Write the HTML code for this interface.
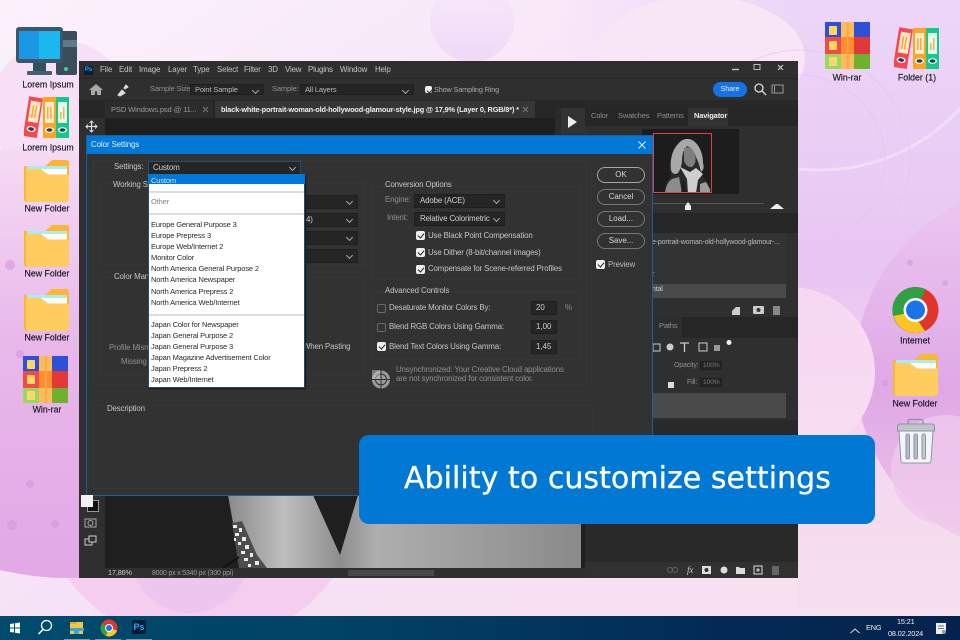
<!DOCTYPE html>
<html><head><meta charset="utf-8"><style>
html,body{margin:0;padding:0;width:960px;height:640px;overflow:hidden;background:#f5dff3}
*{box-sizing:border-box}
#r{position:relative;width:960px;height:640px;overflow:hidden;font-family:"Liberation Sans",sans-serif}
.a,.t,.l,.d,.b{position:absolute}
.t{white-space:nowrap;font-size:7.9px;letter-spacing:-.15px;line-height:10px;color:#c4c4c4;transform:translateY(-5px)}
.g{color:#8f8f8f}.w{color:#efefef}
.l{white-space:nowrap;font-size:8.8px;line-height:11px;color:#14141c;width:80px;text-align:center;transform:translate(-40px,-5.5px);-webkit-text-stroke:.15px #14141c}
.d{white-space:nowrap;font-size:7.5px;letter-spacing:-.15px;line-height:10px;color:#2a2a2a;left:151px;transform:translateY(-5px)}
.b{left:597px;width:48px;height:16px;border:1px solid #a5a5a5;border-radius:8px;text-align:center;color:#d6d6d6;font-size:7.9px;line-height:14px}
.s{position:absolute;background:#252525;height:14px;border:1px solid #1f1f1f;letter-spacing:-.15px;white-space:nowrap}
.s:after{content:"";position:absolute;right:5px;top:3px;width:4px;height:4px;border-right:1px solid #aaa;border-bottom:1px solid #aaa;transform:rotate(45deg)}
.c{position:absolute;width:9px;height:9px;background:#eee;border-radius:2px}
.c:after{content:"";position:absolute;left:3px;top:1px;width:3px;height:5px;border-right:1.4px solid #222;border-bottom:1.4px solid #222;transform:rotate(40deg)}
.u{position:absolute;width:9px;height:9px;background:#333;border:1px solid #6a6a6a;border-radius:2px}
.n{position:absolute;background:#252525;border:1px solid #1f1f1f;color:#cfcfcf;font-size:7.9px;line-height:12px;padding-left:4px;height:14px;width:26px}
.p{position:absolute;border:1px dotted #3a3a3a}
</style></head><body><div id="r">

<svg class="a" style="left:0;top:0" width="960" height="640" viewBox="0 0 960 640">
<defs>
<linearGradient id="bg" x1="0" y1="0" x2="1" y2="1"><stop offset="0" stop-color="#fbf1fb"/><stop offset=".5" stop-color="#f6e2f6"/><stop offset="1" stop-color="#f7dfee"/></linearGradient>
<linearGradient id="bl" x1="0" y1="0" x2="0" y2="1"><stop offset="0" stop-color="#f6dcf5"/><stop offset=".45" stop-color="#e8b8ea"/><stop offset="1" stop-color="#e2a8e7"/></linearGradient>
<linearGradient id="rt" x1="0" y1="0" x2="0" y2="1"><stop offset="0" stop-color="#ecd6f7"/><stop offset=".45" stop-color="#e8c6f2"/><stop offset=".68" stop-color="#f5d6f1"/><stop offset="1" stop-color="#f6dfee"/></linearGradient>
<linearGradient id="rc" x1="0" y1="0" x2="0" y2="1"><stop offset="0" stop-color="#ecc8f0"/><stop offset=".55" stop-color="#dfa8e6"/><stop offset=".8" stop-color="#e9b9e8"/><stop offset="1" stop-color="#f3d5ee"/></linearGradient>
<linearGradient id="pc" x1="0" y1="0" x2="0" y2="1"><stop offset="0" stop-color="#f6d8f2"/><stop offset="1" stop-color="#f8ddf1"/></linearGradient>
<linearGradient id="tp" x1="0" y1="0" x2="1" y2="0"><stop offset="0" stop-color="#ecd6f7" stop-opacity="0"/><stop offset="1" stop-color="#ecd6f7"/></linearGradient>
<linearGradient id="tc" x1="0" y1="0" x2="0" y2="1"><stop offset="0" stop-color="#f0dcf8" stop-opacity="0"/><stop offset="1" stop-color="#efd9f8"/></linearGradient>
<symbol id="folder" viewBox="0 0 45 42"><path d="M20 7L28 0H42Q45 0 45 3V16H20Z" fill="#fdb62f"/><path d="M0 6H45V38Q45 42 41 42H3Q0 42 0 38Z" fill="#fdb62f"/><path d="M3 6H43V15H3Z" fill="#fff"/><path d="M3 6H43V9H3Z" fill="#a7eef0"/><path d="M2 9H17L24 14.500H45V38Q45 42 41 42H4Q2 42 2 38Z" fill="#ffcc60"/></symbol>
<symbol id="binder" viewBox="0 0 45 42"><g transform="rotate(9 8 21)"><rect x="2" y="1" width="14" height="40" fill="#f6484f"/><rect x="4.500" y="5" width="10" height="21" fill="#ffe9c8"/><rect x="7" y="9" width="1.500" height="13" fill="#f9a63c"/><rect x="10" y="9" width="1.500" height="13" fill="#f9a63c"/><ellipse cx="9" cy="33" rx="4.500" ry="2.800" fill="#fff"/><ellipse cx="9" cy="33" rx="3" ry="1.800" fill="#22405a"/></g><rect x="19" y="1" width="13" height="41" fill="#fca522"/><rect x="21" y="6" width="9" height="21" fill="#ffeacc"/><rect x="23" y="11" width="1.500" height="12" fill="#f8aa3a"/><rect x="26" y="11" width="1.500" height="12" fill="#f8aa3a"/><ellipse cx="25.500" cy="34" rx="4.500" ry="2.800" fill="#fff"/><ellipse cx="25.500" cy="34" rx="3" ry="1.800" fill="#22405a"/><rect x="32" y="1" width="13" height="41" fill="#15ca88"/><rect x="34" y="6" width="9" height="21" fill="#e6fbef"/><rect x="36" y="16" width="1.500" height="7" fill="#f2b24c"/><rect x="39" y="11" width="1.500" height="12" fill="#f2b24c"/><ellipse cx="38.500" cy="34" rx="4.500" ry="2.800" fill="#fff"/><ellipse cx="38.500" cy="34" rx="3" ry="1.800" fill="#22405a"/></symbol>
<symbol id="rar" viewBox="0 0 45 47"><rect width="16" height="15" fill="#2e50d8"/><rect x="29" width="16" height="15" fill="#2e50d8"/><rect y="15" width="16" height="17" fill="#f04a4a"/><rect x="29" y="15" width="16" height="17" fill="#e33838"/><rect y="32" width="16" height="15" fill="#96dc5c"/><rect x="29" y="32" width="16" height="15" fill="#6fb02d"/><rect x="16" width="13" height="47" fill="#fdbb5c"/><rect x="16" y="15" width="13" height="17" fill="#fd8f2e"/><rect x="22" width="1.500" height="47" fill="#f7a648"/><rect x="4" y="4" width="8" height="9" rx="1" fill="#ffd75e"/><rect x="4" y="19" width="8" height="9" rx="1" fill="#ffd75e"/><rect x="4" y="35" width="8" height="9" rx="1" fill="#ffd675"/></symbol>
<linearGradient id="arm" x1="0" y1="0" x2="1" y2="0"><stop offset="0" stop-color="#8a8a8a"/><stop offset=".5" stop-color="#bebebe"/><stop offset="1" stop-color="#8e8e8e"/></linearGradient>
<linearGradient id="arm2" x1="0" y1="0" x2="1" y2="0"><stop offset="0" stop-color="#8e8e8e"/><stop offset=".15" stop-color="#aeaeae"/><stop offset="1" stop-color="#8a8a8a"/></linearGradient>
</defs>
<rect width="960" height="640" fill="url(#bg)"/>
<rect x="798" y="0" width="162" height="616" fill="url(#rt)"/>
<rect x="560" y="0" width="238" height="62" fill="url(#tp)"/>
<ellipse cx="700" cy="58" rx="105" ry="62" fill="#f8e6f6"/>
<circle cx="472" cy="20" r="42" fill="url(#tc)"/>
<circle cx="820" cy="-20" r="190" fill="none" stroke="#f3e4fa" stroke-width="3" opacity=".7"/>
<circle cx="800" cy="160" r="110" fill="none" stroke="#e4c4f0" stroke-width="1" opacity=".7"/>
<circle cx="800" cy="160" r="85" fill="none" stroke="#e4c4f0" stroke-width="1" opacity=".7"/>
<circle cx="1040" cy="370" r="185" fill="url(#rc)"/>
<circle cx="790" cy="372" r="85" fill="url(#pc)"/>
<circle cx="946" cy="470" r="55" fill="#efc9ec" opacity=".8"/>
<circle cx="60" cy="110" r="70" fill="#f7e0f6"/>
<circle cx="200" cy="480" r="165" fill="#f5cdee"/>
<circle cx="190" cy="553" r="60" fill="#ecc6ee"/>
<path d="M0 150Q60 130 140 190V560Q90 590 0 570Z" fill="url(#bl)"/>
<path d="M10 260a5 5 0 1 0 .1 0M45 310a4 4 0 1 0 .1 0M20 350a4 4 0 1 0 .1 0M30 480a4 4 0 1 0 .1 0M12 520a5 5 0 1 0 .1 0M55 520a4 4 0 1 0 .1 0M910 260a3 3 0 1 0 .1 0M945 280a3 3 0 1 0 .1 0M885 380a3 3 0 1 0 .1 0" fill="#d497dd" opacity=".6"/>
<g>
<rect x="56" y="31" width="21" height="44" rx="2" fill="#3a4d5c"/><rect x="62" y="40" width="15" height="7" fill="#5e7a8c"/><circle cx="66" cy="69" r="2" fill="#44d18f"/>
<rect x="16" y="27" width="47" height="36" rx="3" fill="#3f5666"/><rect x="19" y="31" width="20" height="28" fill="#1a98e6"/><rect x="39" y="31" width="21" height="28" fill="#1ab7f2"/><rect x="33" y="63" width="13" height="8" fill="#33505f"/><rect x="27" y="71" width="25" height="4" rx="1" fill="#46606f"/>
</g>
<use href="#binder" x="24" y="96" width="45" height="42"/>
<use href="#folder" x="24" y="160" width="45" height="42"/>
<use href="#folder" x="24" y="225" width="45" height="42"/>
<use href="#folder" x="24" y="289" width="45" height="42"/>
<use href="#rar" x="23" y="356" width="45" height="47"/>
<use href="#rar" x="825" y="22" width="45" height="47"/>
<use href="#binder" x="894" y="27" width="45" height="42"/>
<use href="#folder" x="893" y="354" width="45" height="42"/>
<g>
<circle cx="915.500" cy="310" r="23" fill="#e0352b"/>
<path d="M915.500 310L895.500 298.500A23 23 0 0 1 915.500 287L926 289Z" fill="#2fa143"/><path d="M915.500 310L895.500 298.500A23 23 0 0 0 903 329.500Z" fill="#2fa143"/>
<path d="M893.500 316L912 312L925 331A23 23 0 0 1 893.500 316Z" fill="#fdc522"/>
<circle cx="915.500" cy="310" r="12" fill="#fff"/><circle cx="915.500" cy="310" r="9.500" fill="#1a73e8"/>
</g>
<g stroke="#8d93a6" stroke-width="1">
<rect x="908" y="419.500" width="15" height="6" rx="1.500" fill="none" stroke-width="1.300"/>
<path d="M899 431H933L931 461Q931 463 929 463H903Q901 463 901 461Z" fill="#f3f5f9"/>
<path d="M897.500 427Q897.500 424 900 424H932Q934.500 424 934.500 427V431H897.500Z" fill="#c0c5cb"/>
<rect x="906" y="434" width="3.500" height="25" rx="1.700" fill="#b4bccb"/><rect x="914" y="434" width="3.500" height="25" rx="1.700" fill="#b4bccb"/><rect x="922" y="434" width="3.500" height="25" rx="1.700" fill="#c6cbc9"/>
</g>
</svg>

<div class="l" style="left:48px;top:85px">Lorem Ipsum</div>
<div class="l" style="left:48px;top:148px">Lorem Ipsum</div>
<div class="l" style="left:47px;top:209px">New Folder</div>
<div class="l" style="left:47px;top:274px">New Folder</div>
<div class="l" style="left:47px;top:338px">New Folder</div>
<div class="l" style="left:47px;top:410px">Win-rar</div>
<div class="l" style="left:847px;top:78px">Win-rar</div>
<div class="l" style="left:917px;top:78px">Folder (1)</div>
<div class="l" style="left:915px;top:341px">Internet</div>
<div class="l" style="left:915px;top:404px">New Folder</div>

<!-- Photoshop window -->
<div class="a" style="left:79px;top:61px;width:719px;height:517px;background:#2f2f2f"></div>
<div class="a" style="left:79px;top:78px;width:719px;height:1px;background:#262626"></div>
<div class="a" style="left:84px;top:66px;width:9px;height:9px;background:#001e36;border-radius:1px;color:#31a8ff;font-size:6px;line-height:9px;text-align:center;font-weight:bold">Ps</div>
<div class="t" style="left:100px;top:70px">File</div><div class="t" style="left:119px;top:70px">Edit</div><div class="t" style="left:139px;top:70px">Image</div><div class="t" style="left:168px;top:70px">Layer</div><div class="t" style="left:193px;top:70px">Type</div><div class="t" style="left:217px;top:70px">Select</div><div class="t" style="left:244px;top:70px">Filter</div><div class="t" style="left:268px;top:70px">3D</div><div class="t" style="left:285px;top:70px">View</div><div class="t" style="left:308px;top:70px">Plugins</div><div class="t" style="left:340px;top:70px">Window</div><div class="t" style="left:375px;top:70px">Help</div>
<svg class="a" style="left:730px;top:61px" width="68" height="17"><path d="M4 7.500H11" stroke="#bbb" stroke-width="1.500" transform="translate(-2,1)"/><rect x="24" y="3.500" width="6" height="5" fill="none" stroke="#bbb"/><path d="M48 4l5 5m0-5l-5 5" stroke="#ccc" stroke-width="1.200"/></svg>

<!-- options bar -->
<svg class="a" style="left:88px;top:82px" width="50" height="16"><path d="M8 2L1 8H3V13H7V9.500H9V13H13V8H15Z" fill="#a8a8a8"/><path d="M30 13l4-5 3 3-5 3zM36 6l2-3 2 2-3 2z" fill="#ddd" stroke="#ddd"/></svg>
<div class="t g" style="left:150px;top:89px;font-size:7.500px">Sample Size:</div>
<div class="s" style="left:190px;top:84px;width:74px;height:11px;line-height:9px;font-size:7.500px;color:#bbb;padding-left:4px">Point Sample</div>
<div class="t g" style="left:272px;top:89px;font-size:7.500px">Sample:</div>
<div class="s" style="left:300px;top:84px;width:114px;height:11px;line-height:9px;font-size:7.500px;color:#bbb;padding-left:4px">All Layers</div>
<div class="c" style="left:425px;top:86px;width:7px;height:7px"></div>
<div class="t g" style="left:434px;top:90px;font-size:7.300px;color:#aaa">Show Sampling Ring</div>
<div class="a" style="left:713px;top:82px;width:34px;height:15px;border-radius:8px;background:#1473e6;color:#eee;font-size:7px;line-height:15px;text-align:center">Share</div>
<svg class="a" style="left:752px;top:81px" width="45" height="16"><circle cx="7" cy="7" r="4" fill="none" stroke="#ddd" stroke-width="1.300"/><path d="M10 10l4 4" stroke="#ddd" stroke-width="1.300"/><rect x="20" y="4" width="11" height="8" fill="none" stroke="#999"/><rect x="22" y="5" width="1" height="6" fill="#999"/></svg>

<!-- tabs -->
<div class="a" style="left:79px;top:100px;width:719px;height:18px;background:#262626"></div>
<div class="a" style="left:105px;top:101px;width:108px;height:17px;background:#2c2c2c"></div>
<div class="a" style="left:215px;top:101px;width:320px;height:17px;background:#363636"></div>
<div class="t" style="left:111px;top:110px;font-size:7.600px;color:#999">PSD Windows.psd @ 11...</div>
<div class="t" style="left:221px;top:110px;font-size:7.350px;color:#eee;font-weight:bold">black-white-portrait-woman-old-hollywood-glamour-style.jpg @ 17,9% (Layer 0, RGB/8*) *</div>
<svg class="a" style="left:202px;top:106px" width="330" height="8"><path d="M1 1l5 5m0-5l-5 5M321 1l5 5m0-5l-5 5" stroke="#777"/></svg>
<div class="a" style="left:79px;top:118px;width:26px;height:460px;background:#2f2f2f"></div>
<div class="a" style="left:105px;top:118px;width:450px;height:450px;background:#1f1f1f"></div>
<div class="a" style="left:555px;top:108px;width:30px;height:460px;background:#2b2b2b"></div>
<div class="a" style="left:561px;top:108px;width:24px;height:26px;background:#333;color:#eee"></div>
<svg class="a" style="left:568px;top:116px" width="10" height="12"><path d="M0 0L9 6L0 12Z" fill="#eee"/></svg>
<svg class="a" style="left:85px;top:120px" width="13" height="13"><path d="M6.500 1V12M1 6.500H12" stroke="#ddd" stroke-width="1.200"/><path d="M4.500 3L6.500 1L8.500 3M4.500 10L6.500 12L8.500 10M3 4.500L1 6.500L3 8.500M10 4.500L12 6.500L10 8.500" stroke="#ddd" fill="none"/></svg>

<!-- right panels -->
<div class="a" style="left:585px;top:100px;width:213px;height:478px;background:#2f2f2f"></div>
<div class="a" style="left:585px;top:100px;width:213px;height:8px;background:#282828"></div>
<div class="a" style="left:585px;top:108px;width:213px;height:18px;background:#262626"></div>
<div class="a" style="left:688px;top:108px;width:40px;height:18px;background:#333"></div>
<div class="t g" style="left:591px;top:116px;font-size:7.500px">Color</div><div class="t g" style="left:618px;top:116px;font-size:7.500px">Swatches</div><div class="t g" style="left:657px;top:116px;font-size:7.500px">Patterns</div><div class="t" style="left:694px;top:116px;font-size:7.500px;color:#eee;font-weight:bold">Navigator</div>
<div class="a" style="left:642px;top:129px;width:97px;height:65px;background:#1d1d1d"></div>
<svg class="a" style="left:653px;top:133px" width="60" height="60" viewBox="0 0 60 60">
<rect width="60" height="60" fill="#1c1c1c"/>
<path d="M12 60Q12 48 18 44L16 36Q18 16 28 8Q36 3 43 10Q50 18 50 30Q52 36 47 40L55 50V60Z" fill="#2a2a2a"/>
<path d="M28 8Q36 3 43 10Q50 18 50 30Q52 36 48 39Q46 30 43 24Q40 15 34 13Q29 18 29 27Q29 34 25 40Q20 43 18 37Q16 18 28 8Z" fill="#a8a8a8"/>
<path d="M31 15Q39 12 42 22Q44 30 39 34Q34 35 31 28Z" fill="#7e7e7e"/>
<path d="M27 34L37 39L43 35L50 41L45 47L43 60H35L34 46Z" fill="#cfcfcf"/>
<path d="M12 60Q13 50 19 46L26 44L29 60Z" fill="#8c8c8c"/>
<path d="M30 46L34 60H28Z" fill="#1c1c1c"/>
<path d="M47 51L53 49L57 56V60H47Z" fill="#9c9c9c"/>
</svg>
<div class="a" style="left:653px;top:133px;width:59px;height:60px;border:1px solid #e0413a"></div>
<div class="a" style="left:652px;top:203px;width:112px;height:1px;background:#555"></div>
<svg class="a" style="left:684px;top:202px" width="100" height="9"><path d="M4 0L7 4V8H1V4Z" fill="#eee"/><path d="M86 7L92 2H94L100 7Z" fill="#eee"/></svg>
<div class="a" style="left:585px;top:213px;width:213px;height:20px;background:#262626"></div>
<div class="a" style="left:652px;top:233px;width:134px;height:66px;background:#333"></div>
<div class="a" style="left:652px;top:284px;width:134px;height:14px;background:#4a4a4a"></div>
<div class="t" style="left:652px;top:243px;font-size:7px;color:#bbb">e-portrait-woman-old-hollywood-glamour-...</div>
<div class="t" style="left:652px;top:275px;font-size:7px;color:#bbb">r</div>
<div class="t" style="left:652px;top:290px;font-size:7px;color:#ccc">ntal</div>
<svg class="a" style="left:730px;top:303px" width="55" height="14"><path d="M2 8l4-4 4 4v4H2z M6 4h4v4H6z" fill="#ccc"/><rect x="23" y="3" width="11" height="8" rx="1" fill="#ccc"/><circle cx="28.500" cy="7" r="2" fill="#333"/><rect x="43" y="3" width="7" height="9" fill="#888"/></svg>
<div class="a" style="left:585px;top:317px;width:213px;height:21px;background:#262626"></div>
<div class="a" style="left:652px;top:317px;width:30px;height:21px;background:#2d2d2d"></div>
<div class="t g" style="left:659px;top:326px;font-size:7.500px">Paths</div>
<svg class="a" style="left:652px;top:340px" width="85" height="16"><rect x="1" y="4" width="7" height="7" fill="none" stroke="#ccc"/><circle cx="18" cy="7" r="3.500" fill="#ccc"/><path d="M28 3H37M32.500 3V12" stroke="#ccc" stroke-width="1.300"/><rect x="47" y="3" width="8" height="8" fill="none" stroke="#ccc"/><rect x="62" y="5" width="6" height="6" fill="#999"/><circle cx="77" cy="2.500" r="2.500" fill="#eee"/></svg>
<div class="t g" style="left:674px;top:366px;font-size:7px">Opacity:</div><div class="n" style="left:700px;top:361px;height:9px;width:22px;line-height:7px;font-size:6.500px;color:#777;padding-left:2px">100%</div>
<div class="t g" style="left:687px;top:383px;font-size:7px">Fill:</div><div class="n" style="left:700px;top:378px;height:9px;width:22px;line-height:7px;font-size:6.500px;color:#777;padding-left:2px">100%</div>
<div class="a" style="left:668px;top:382px;width:6px;height:6px;background:#ddd"></div>
<div class="a" style="left:652px;top:393px;width:134px;height:25px;background:#4a4a4a"></div>
<div class="a" style="left:585px;top:420px;width:213px;height:145px;background:#292929"></div>
<div class="a" style="left:585px;top:562px;width:213px;height:16px;background:#313131"></div>
<div class="t g" style="left:687px;top:570px;font-size:9px;font-family:'Liberation Serif',serif;font-style:italic;color:#ccc">fx</div>
<svg class="a" style="left:666px;top:563px" width="125" height="14"><circle cx="4" cy="7" r="2.500" fill="none" stroke="#666"/><circle cx="9" cy="7" r="2.500" fill="none" stroke="#666"/><rect x="36" y="3" width="9" height="8" fill="#ddd"/><circle cx="40.500" cy="7" r="2" fill="#333"/><circle cx="58" cy="7" r="3.500" fill="#ddd"/><path d="M70 4h3l1 1h5v6h-9z" fill="#ddd"/><rect x="88" y="3" width="8" height="8" fill="none" stroke="#ddd"/><path d="M90 7h4M92 5v4" stroke="#ddd"/><rect x="106" y="3" width="7" height="9" fill="#666"/></svg>

<!-- bottom canvas -->
<svg class="a" style="left:105px;top:495px" width="480" height="73" viewBox="0 0 480 73">
<rect width="480" height="73" fill="#1f1f1f"/>
<path d="M123 0H208L235 60V73H148Q136 44 128 28Z" fill="url(#arm)"/>
<path d="M253 0H476V73H235V60Z" fill="url(#arm2)"/>
<path d="M127 28L137 26L152 60L162 73H134Z" fill="#4d4d4d"/>
<path d="M128 30h4v3h-4zM134 33h3v4h-3zM130 38h4v3h-4zM137 42h4v4h-4zM133 47h3v3h-3zM140 50h4v4h-4zM136 56h4v3h-4zM145 58h3v4h-3zM139 63h4v3h-4zM150 66h4v4h-4zM143 69h3v3h-3zM129 43h2v3h-2z" fill="#eaeaea"/>
<path d="M118 73L134 62" stroke="#111" stroke-width="2"/>
</svg>
<div class="a" style="left:105px;top:568px;width:480px;height:10px;background:#2f2f2f"></div>
<div class="a" style="left:348px;top:570px;width:86px;height:6px;background:#484848"></div>
<div class="t" style="left:108px;top:573px;font-size:7.300px;color:#ccc">17,86%</div>
<div class="t g" style="left:152px;top:574px;font-size:6.900px;color:#999">8000 px x 5340 px (300 ppi)</div>

<div class="a" style="left:81px;top:495px;width:12px;height:12px;background:#f2f2f2;z-index:2"></div>
<div class="a" style="left:87px;top:500px;width:12px;height:12px;background:#111;border:1px solid #999"></div>
<svg class="a" style="left:84px;top:518px" width="15" height="30"><rect x="1" y="1" width="11" height="8" fill="none" stroke="#aaa"/><circle cx="6.500" cy="5" r="2.500" fill="none" stroke="#aaa"/><rect x="1" y="21" width="7" height="6" fill="none" stroke="#ccc"/><rect x="5" y="18" width="7" height="6" fill="#2f2f2f" stroke="#ccc"/></svg>

<!-- dialog -->
<div class="a" style="left:86px;top:135px;width:567px;height:361px;background:#323232;border:1px solid #1c5f9e"></div>
<div class="a" style="left:87px;top:136px;width:566px;height:18px;background:#0078d7"></div>
<div class="t" style="left:91px;top:145px;font-size:8px;color:#e2eef8">Color Settings</div>
<svg class="a" style="left:638px;top:141px" width="8" height="8"><path d="M0.500 0.500L7.500 7.500M7.500 0.500L0.500 7.500" stroke="#e8f2fb"/></svg>

<div class="p" style="left:100px;top:183px;width:265px;height:82px"></div>
<div class="p" style="left:100px;top:277px;width:265px;height:98px"></div>
<div class="p" style="left:372px;top:186px;width:208px;height:94px"></div>
<div class="p" style="left:372px;top:291px;width:208px;height:69px"></div>
<div class="p" style="left:93px;top:405px;width:500px;height:84px"></div>
<div class="p" style="left:93px;top:160px;width:494px;height:225px"></div>

<div class="t" style="left:114px;top:167px">Settings:</div>
<div class="s" style="left:148px;top:161px;width:153px;height:14px;border-color:#1b4f80;line-height:12px;padding-left:4px;color:#cfcfcf;font-size:8px">Custom</div>
<div class="t" style="left:113px;top:185px">Working S</div>
<div class="t" style="left:114px;top:277px">Color Man</div>
<div class="t g" style="left:109px;top:348px">Profile Mism</div>
<div class="t g" style="left:121px;top:362px">Missing</div>
<div class="t" style="left:303px;top:347px">When Pasting</div>
<div class="s" style="left:300px;top:195px;width:58px"></div>
<div class="s" style="left:300px;top:213px;width:58px;color:#ccc;font-size:7.900px;line-height:12px;padding-left:5px">4)</div>
<div class="s" style="left:300px;top:231px;width:58px"></div>
<div class="s" style="left:300px;top:249px;width:58px"></div>
<div class="t" style="left:107px;top:409px">Description</div>

<!-- dropdown -->
<div class="a" style="left:148px;top:174px;width:157px;height:214px;background:#fff;border:1px solid #1b4f80;border-top:0;box-shadow:1px 1px 1px #181818"></div>
<div class="a" style="left:148px;top:174px;width:157px;height:10px;background:#0078d7"></div>
<div class="a" style="left:149px;top:191px;width:155px;height:1.500px;background:#dedede"></div>
<div class="a" style="left:149px;top:213px;width:155px;height:1.500px;background:#dedede"></div>
<div class="a" style="left:149px;top:314px;width:155px;height:1.500px;background:#dedede"></div>
<div class="d" style="top:181px;color:#d7e8f7">Custom</div>
<div class="d" style="top:202px;color:#858585">Other</div>
<div class="d" style="top:225px">Europe General Purpose 3</div>
<div class="d" style="top:236px">Europe Prepress 3</div>
<div class="d" style="top:247px">Europe Web/Internet 2</div>
<div class="d" style="top:258px">Monitor Color</div>
<div class="d" style="top:269px">North America General Purpose 2</div>
<div class="d" style="top:280px">North America Newspaper</div>
<div class="d" style="top:292px">North America Prepress 2</div>
<div class="d" style="top:303px">North America Web/Internet</div>
<div class="d" style="top:325px">Japan Color for Newspaper</div>
<div class="d" style="top:336px">Japan General Purpose 2</div>
<div class="d" style="top:347px">Japan General Purpose 3</div>
<div class="d" style="top:358px">Japan Magazine Advertisement Color</div>
<div class="d" style="top:369px">Japan Prepress 2</div>
<div class="d" style="top:380px">Japan Web/Internet</div>

<!-- conversion -->
<div class="t" style="left:385px;top:185px">Conversion Options</div>
<div class="t g" style="left:385px;top:200px">Engine:</div>
<div class="s" style="left:414px;top:194px;width:91px;line-height:12px;padding-left:5px;color:#cfcfcf;font-size:7.900px">Adobe (ACE)</div>
<div class="t g" style="left:387px;top:218px">Intent:</div>
<div class="s" style="left:414px;top:212px;width:91px;line-height:12px;padding-left:5px;color:#cfcfcf;font-size:7.900px">Relative Colorimetric</div>
<div class="c" style="left:416px;top:231px"></div><div class="t" style="left:428px;top:236px">Use Black Point Compensation</div>
<div class="c" style="left:416px;top:248px"></div><div class="t" style="left:428px;top:253px">Use Dither (8-bit/channel images)</div>
<div class="c" style="left:416px;top:265px"></div><div class="t" style="left:428px;top:269px">Compensate for Scene-referred Profiles</div>
<div class="t" style="left:385px;top:291px">Advanced Controls</div>
<div class="u" style="left:377px;top:304px"></div><div class="t" style="left:389px;top:308px">Desaturate Monitor Colors By:</div>
<div class="n" style="left:531px;top:301px">20</div><div class="t g" style="left:565px;top:308px">%</div>
<div class="u" style="left:377px;top:323px"></div><div class="t" style="left:389px;top:327px">Blend RGB Colors Using Gamma:</div>
<div class="n" style="left:531px;top:320px">1,00</div>
<div class="c" style="left:377px;top:342px"></div><div class="t" style="left:389px;top:347px">Blend Text Colors Using Gamma:</div>
<div class="n" style="left:531px;top:340px">1,45</div>
<svg class="a" style="left:371px;top:369px" width="20" height="21"><circle cx="10" cy="10.500" r="9" fill="#9a9a9a"/><circle cx="10" cy="10.500" r="5.500" fill="none" stroke="#333"/><path d="M10 1V20M1 10.500H19" stroke="#333"/><rect x="1" y="1" width="8" height="9" fill="#c6c6c6" opacity=".5"/></svg>
<div class="t g" style="left:396px;top:370px">Unsynchronized: Your Creative Cloud applications</div>
<div class="t g" style="left:396px;top:379px">are not synchronized for consistent color.</div>

<div class="b" style="top:167px">OK</div><div class="b" style="top:189px;border-color:#777">Cancel</div><div class="b" style="top:211px;border-color:#777">Load...</div><div class="b" style="top:233px;border-color:#777">Save...</div>
<div class="c" style="left:596px;top:260px"></div><div class="t" style="left:608px;top:265px;color:#bbb">Preview</div>

<!-- caption -->
<div class="a" style="left:359px;top:435px;width:516px;height:89px;background:#0078d4;border-radius:10px;color:#fff;font-family:'DejaVu Sans',sans-serif;font-size:30px;line-height:88px;padding-left:45px;white-space:nowrap;letter-spacing:.05px;-webkit-text-stroke:.3px #fff">Ability to customize settings</div>

<!-- taskbar -->
<div class="a" style="left:0;top:616px;width:960px;height:24px;background:linear-gradient(90deg,#004b6c 0%,#014365 35%,#032a55 75%,#04224d 100%)"></div>
<svg class="a" style="left:0;top:616px" width="160" height="24">
<path d="M10 8L14 7.400V11.500H10ZM15 7.300L20 6.500V11.500H15ZM10 12.500H14V16.500L10 16ZM15 12.500H20V17.500L15 16.800Z" fill="#fff"/>
<circle cx="46.500" cy="9.500" r="5" fill="none" stroke="#fff" stroke-width="1.300"/><path d="M43 13.500L38.500 18" stroke="#fff" stroke-width="1.500"/>
<path d="M70 6H83V18H70Z" fill="#f7c744"/><path d="M70 6H76L77 8H70Z" fill="#e9a824"/><rect x="70" y="12" width="14" height="3" fill="#3aa4dd"/><rect x="74" y="15" width="5" height="3" fill="#3aa4dd"/>
<circle cx="109" cy="12" r="8.500" fill="#e0352b"/><path d="M109 12L102 7.500A8.500 8.500 0 0 0 106 20Z" fill="#2fa143"/><path d="M106 20L109 12L117 14.500A8.500 8.500 0 0 1 106 20Z" fill="#fdc522"/><circle cx="109" cy="12" r="4" fill="#fff"/><circle cx="109" cy="12" r="3" fill="#1a73e8"/>
<rect x="132" y="4" width="14" height="14" rx="2" fill="#001e36"/>
<rect x="64" y="23" width="26" height="1" fill="#6c9fc0"/><rect x="95" y="23" width="26" height="1" fill="#6c9fc0"/><rect x="126" y="23" width="26" height="1" fill="#6c9fc0"/>
</svg>
<div class="a" style="left:132px;top:620px;width:14px;height:14px;color:#31a8ff;font-size:9px;font-weight:bold;line-height:14px;text-align:center">Ps</div>
<svg class="a" style="left:849px;top:627px" width="12" height="8"><path d="M1.500 6L6 2L10.500 6" stroke="#ddd" fill="none"/></svg>
<div class="t w" style="left:866px;top:628px;font-size:7.300px">ENG</div>
<div class="t w" style="left:897px;top:622px;font-size:7.300px">15:21</div>
<div class="t w" style="left:888px;top:634px;font-size:7.300px">08.02.2024</div>
<svg class="a" style="left:935px;top:622px" width="12" height="14"><path d="M1 1H11V9L8 12H1Z" fill="#eee"/><path d="M3 4H9M3 6.500H9" stroke="#777"/><circle cx="9" cy="10" r="2" fill="#89a"/></svg>

</div></body></html>
